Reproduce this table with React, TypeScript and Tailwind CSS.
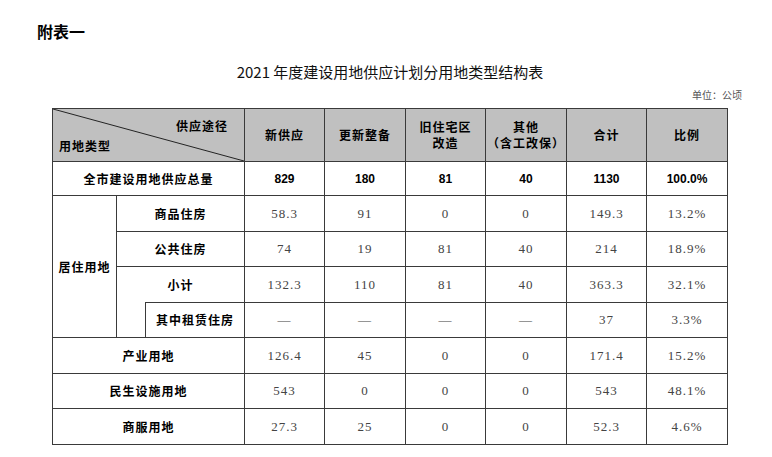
const cjk = { fontFamily: '"Noto Sans CJK SC", "Noto Sans", sans-serif' };
const serif = { fontFamily: '"Liberation Serif", "Noto Sans CJK SC", serif' };
const sansNum = { fontFamily: '"Liberation Sans", "Noto Sans CJK SC", sans-serif' };

type Row = {
  values: string[];
};

const cell = 'border border-[#3a3a3a] text-center align-middle p-0';

function Values({ values, bold }: { values: string[]; bold?: boolean }) {
  return (
    <>
      {values.map((v, i) => (
        <td
          key={i}
          className={
            cell +
            (bold ? ' text-[12px] font-bold text-black' : ' text-[13px] tracking-[1px] text-[#444]')
          }
          style={bold ? sansNum : serif}
        >
          {v}
        </td>
      ))}
    </>
  );
}

const label = 'text-[12px] font-bold text-black tracking-[1px]';

export default function App() {
  const rows: Record<string, Row> = {
    total: { values: ['829', '180', '81', '40', '1130', '100.0%'] },
    shangpin: { values: ['58.3', '91', '0', '0', '149.3', '13.2%'] },
    gonggong: { values: ['74', '19', '81', '40', '214', '18.9%'] },
    xiaoji: { values: ['132.3', '110', '81', '40', '363.3', '32.1%'] },
    zulin: { values: ['—', '—', '—', '—', '37', '3.3%'] },
    chanye: { values: ['126.4', '45', '0', '0', '171.4', '15.2%'] },
    minsheng: { values: ['543', '0', '0', '0', '543', '48.1%'] },
    shangfu: { values: ['27.3', '25', '0', '0', '52.3', '4.6%'] },
  };

  return (
    <div className="w-[772px] h-[457px] bg-white overflow-hidden relative" style={cjk}>
      <div className="pt-[22px] pl-[37px] text-[16px] font-bold leading-[18px] text-black">附表一</div>
      <div className="mt-[23px] text-center text-[15px] leading-[18px] text-[#111] pl-[8px]">
        2021 年度建设用地供应计划分用地类型结构表
      </div>
      <div className="mt-[9px] pr-[30px] text-right text-[10px] leading-[12px] text-[#555]" style={serif}>
        单位：公顷
      </div>
      <table className="ml-[52px] mt-[6px] table-fixed border-collapse w-[675px]" style={cjk}>
        <colgroup>
          <col className="w-[64px]" />
          <col className="w-[29px]" />
          <col className="w-[99px]" />
          <col className="w-[80px]" />
          <col className="w-[81px]" />
          <col className="w-[80px]" />
          <col className="w-[81px]" />
          <col className="w-[80px]" />
          <col className="w-[81px]" />
        </colgroup>
        <tbody>
          <tr className="h-[52px] bg-[#c0c0c0]">
            <td colSpan={3} className={cell + ' relative'}>
              <svg className="absolute inset-0 w-full h-full" viewBox="0 0 192 52" preserveAspectRatio="none">
                <line x1="0" y1="0" x2="192" y2="52" stroke="#222" strokeWidth="1" />
              </svg>
              <div className="relative h-[52px]">
                <span className={label + ' absolute right-[16px] top-[8px]'}>供应途径</span>
                <span className={label + ' absolute left-[6px] bottom-[6px]'}>用地类型</span>
              </div>
            </td>
            <td className={cell + ' ' + label}>新供应</td>
            <td className={cell + ' ' + label}>更新整备</td>
            <td className={cell + ' ' + label + ' leading-[16px]'}>
              旧住宅区
              <br />
              改造
            </td>
            <td className={cell + ' ' + label + ' leading-[16px]'}>
              其他
              <br />
              （含工改保）
            </td>
            <td className={cell + ' ' + label}>合计</td>
            <td className={cell + ' ' + label}>比例</td>
          </tr>
          <tr className="h-[34px]">
            <td colSpan={3} className={cell + ' ' + label}>全市建设用地供应总量</td>
            <Values values={rows.total.values} bold />
          </tr>
          <tr className="h-[36px]">
            <td rowSpan={4} className={cell + ' ' + label}>居住用地</td>
            <td colSpan={2} className={cell + ' ' + label}>商品住房</td>
            <Values values={rows.shangpin.values} />
          </tr>
          <tr className="h-[35px]">
            <td colSpan={2} className={cell + ' ' + label}>公共住房</td>
            <Values values={rows.gonggong.values} />
          </tr>
          <tr className="h-[36px]">
            <td colSpan={2} className={cell + ' border-b-0 ' + label}>小计</td>
            <Values values={rows.xiaoji.values} />
          </tr>
          <tr className="h-[35px]">
            <td className={cell + ' border-t-0'} />
            <td className={cell + ' ' + label}>其中租赁住房</td>
            <Values values={rows.zulin.values} />
          </tr>
          <tr className="h-[36px]">
            <td colSpan={3} className={cell + ' ' + label}>产业用地</td>
            <Values values={rows.chanye.values} />
          </tr>
          <tr className="h-[35px]">
            <td colSpan={3} className={cell + ' ' + label}>民生设施用地</td>
            <Values values={rows.minsheng.values} />
          </tr>
          <tr className="h-[36px]">
            <td colSpan={3} className={cell + ' ' + label}>商服用地</td>
            <Values values={rows.shangfu.values} />
          </tr>
        </tbody>
      </table>
    </div>
  );
}
